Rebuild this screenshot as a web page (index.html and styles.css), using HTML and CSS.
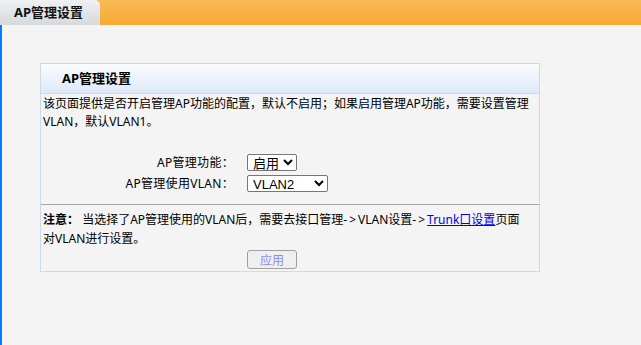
FILE: index.html
```html
<!DOCTYPE html>
<html lang="zh-CN">

<head>
  <meta charset="UTF-8">
  <meta name="viewport" content="width=device-width, initial-scale=1.0">
  <title>AP管理设置</title>
  <link rel="stylesheet" href="styles.css">
</head>

<body>
  <div class="topbar">
    <div class="tab">AP管理设置</div>
  </div>
  <div class="main">
    <div class="panel">
      <div class="panel-head">AP管理设置</div>
      <div class="desc">该页面提供是否开启管理AP功能的配置，默认不启用；如果启用管理AP功能，需要设置管理VLAN，默认VLAN1。</div>
      <div class="form">
        <label class="label">AP管理功能：</label>
        <div class="field">
          <select class="select small">
            <option>启用</option>
            <option>禁用</option>
          </select>
        </div>
        <label class="label">AP管理使用VLAN：</label>
        <div class="field">
          <select class="select wide">
            <option>VLAN2</option>
            <option>VLAN1</option>
          </select>
        </div>
      </div>
      <div class="note">
        <b>注意：</b> 当选择了AP管理使用的VLAN后，需要去接口管理<span class="arrow">-&gt;</span>VLAN设置<span class="arrow">-&gt;</span><a href="#">Trunk口设置</a>页面对VLAN进行设置。
      </div>
      <div class="actions">
        <button class="btn" disabled>应用</button>
      </div>
    </div>
  </div>
</body>
</html>
```

FILE: styles.css
```css
html, body {
  margin: 0;
  height: 100%;
}
body {
  background-color: #f4f4f4;
  font-family: "Noto Sans", "Noto Sans CJK SC", sans-serif;
  font-size: 12px;
  color: #000;
}
.topbar {
  height: 25px;
  background: linear-gradient(#f9b955, #f6ab34);
  display: flex;
}
.tab {
  width: 86px;
  height: 25px;
  padding-left: 14px;
  background: linear-gradient(#eef0f2, #d6dadd);
  border-top-right-radius: 5px;
  font-size: 13px;
  font-weight: bold;
  color: #111;
  line-height: 25px;
}
.main {
  border-left: 2px solid #0a78ff;
  min-height: calc(100% - 25px);
  box-sizing: border-box;
  padding: 38px 0 0 38px;
}
.panel {
  width: 498px;
  border: 1px solid #c8dcef;
  padding-bottom: 2px;
}
.panel-head {
  height: 29px;
  line-height: 28px;
  padding-left: 21px;
  font-size: 13px;
  font-weight: bold;
  background: linear-gradient(#fbfcfe, #dde9f8);
  border-bottom: 1px solid #c8dcef;
}
.desc {
  padding: 1px 2px 0 2px;
  line-height: 18px;
}
.form {
  display: grid;
  grid-template-columns: 193px auto;
  column-gap: 13px;
  row-gap: 4px;
  margin-top: 23px;
  align-items: center;
}
.label {
  text-align: right;
  line-height: 16px;
  letter-spacing: 0.3px;
}
.field {
  display: flex;
}
.select {
  height: 17px;
  border: 1px solid #767676;
  border-radius: 2px;
  background-color: #fff;
  font-family: "Liberation Sans", "Noto Sans CJK SC", sans-serif;
  font-size: 13px;
  padding: 0 1px;
}
.small {
  width: 50px;
}
.wide {
  width: 81px;
}
.note {
  margin-top: 12px;
  border-top: 1px solid #a8a8a8;
  padding: 5px 9px 0 2px;
  line-height: 19px;
}
.arrow {
  letter-spacing: 2px;
}
.note a {
  color: #0000ee;
}
.actions {
  display: flex;
  padding-left: 206px;
  margin-top: 2px;
}
.btn {
  width: 50px;
  height: 19px;
  border: 1px solid #a0a0a0;
  border-radius: 3px;
  background-color: #efefef;
  color: #8c8cf0;
  font-family: "Noto Sans", "Noto Sans CJK SC", sans-serif;
  font-size: 12px;
  padding: 0;
}
```
